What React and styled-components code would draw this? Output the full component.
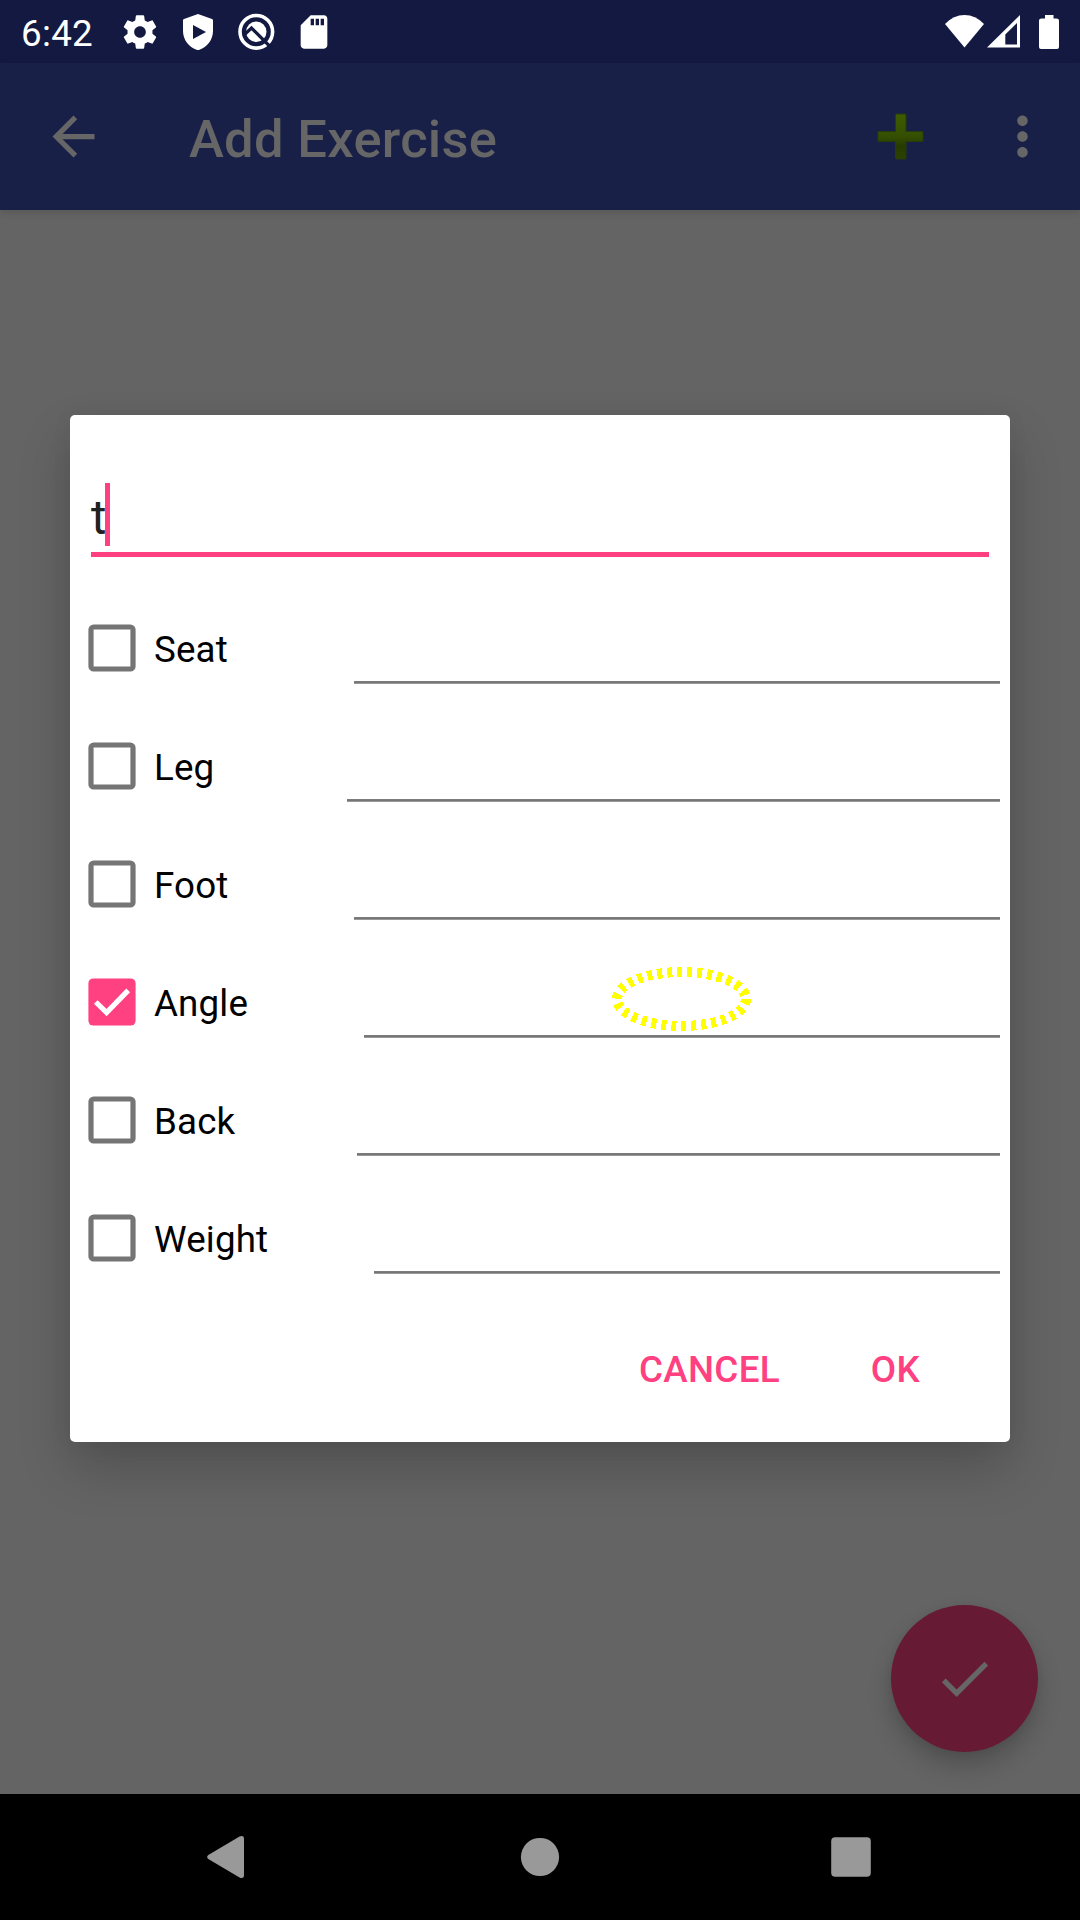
import React from "react";
import styled, { createGlobalStyle } from "styled-components";

const accent = "#ff4081";

const GlobalStyle = createGlobalStyle`
  html, body { margin: 0; padding: 0; background: #000; overflow: hidden; }
  * { box-sizing: border-box; }
`;

const Screen = styled.div`
  position: relative;
  display: flex;
  flex-direction: column;
  width: 1080px;
  height: 1920px;
  overflow: hidden;
  background: #646464;
  font-family: Roboto, "Noto Sans", sans-serif;
`;

const StatusBar = styled.header`
  display: flex;
  align-items: center;
  height: 63px;
  padding: 0 21px;
  background: #131940;
  color: #fff;
`;

const Clock = styled.span`
  width: 99px;
  font-size: 36.75px;
  line-height: 43px;
  padding-top: 3px;
  letter-spacing: 0.3px;
`;

const Notifications = styled.div`
  display: flex;
  flex: 1;
  gap: 18px;
`;

const SystemIcons = styled.div`
  display: flex;
  align-items: center;
`;

const Glyph = styled.svg`
  display: block;
  flex: none;
  width: ${(p) => p.$w}px;
  height: ${(p) => p.$h || p.$w}px;
  margin-left: ${(p) => p.$ml || 0}px;
  fill: ${(p) => p.$fill || "currentColor"};
`;

const Toolbar = styled.nav`
  display: flex;
  align-items: center;
  height: 147px;
  padding: 0 26px 0 42px;
  background: #192048;
  color: #666;
  box-shadow: 0 2px 8px rgba(0, 0, 0, 0.14);
`;

const Title = styled.h1`
  flex: 1;
  margin: 0;
  padding: 4px 0 0 84px;
  font-size: 52.5px;
  line-height: 62px;
  font-weight: 500;
  letter-spacing: 0.3px;
`;

const Content = styled.main`
  flex: 1;
`;

const NavBar = styled.footer`
  display: flex;
  align-items: center;
  height: 126px;
  padding-left: 207px;
  background: #000;
  color: #999;
`;

const Fab = styled.button`
  position: absolute;
  right: 42px;
  bottom: 168px;
  display: flex;
  align-items: center;
  justify-content: center;
  width: 147px;
  height: 147px;
  padding: 0;
  border: 0;
  border-radius: 50%;
  background: #661a34;
  color: #666;
  box-shadow: 0 14px 24px rgba(0, 0, 0, 0.2), 0 2px 8px rgba(0, 0, 0, 0.06);
`;

const Dialog = styled.section`
  position: absolute;
  left: 70px;
  top: 415px;
  display: flex;
  flex-direction: column;
  width: 940px;
  height: 1027px;
  border-radius: 5px;
  background: #fff;
  box-shadow: 0 26px 52px rgba(0, 0, 0, 0.2), 0 0 24px rgba(0, 0, 0, 0.04);
`;

const NameField = styled.div`
  display: flex;
  align-items: flex-end;
  height: 142px;
  margin: 0 21px 32px;
  padding-bottom: 11px;
  padding-bottom: 6px;
  border-bottom: 5px solid ${accent};
  color: #212121;
  font-size: 47.25px;
`;

const NameText = styled.span`
  width: 14px;
  height: 63px;
  line-height: 70px;
`;

const Caret = styled.span`
  width: 5px;
  height: 63px;
  background: ${accent};
`;

const Row = styled.div`
  display: flex;
  align-items: center;
  height: 118px;
  padding: 0 10px 0 18px;
`;

const Box = styled.span`
  display: flex;
  flex: none;
  width: 48px;
  height: 48px;
  color: ${(p) => (p.$checked ? accent : "#757575")};
`;

const Label = styled.label`
  flex: 1;
  padding: 2px 0 0 18px;
  color: #000;
  font-size: 36.75px;
  line-height: 43px;
  letter-spacing: 0.15px;
`;

const Field = styled.div`
  align-self: flex-end;
  width: ${(p) => p.$width}px;
  height: 3px;
  margin-bottom: 23px;
  background: linear-gradient(#7c7c7c 0 1px, #757575 1px 2px, #999 2px 3px);
`;

const Actions = styled.div`
  display: flex;
  flex: 1;
  align-items: center;
  justify-content: flex-end;
  gap: 91px;
  padding-right: 90px;
`;

const Action = styled.button`
  padding: 0;
  border: 0;
  background: none;
  color: ${accent};
  font: 500 36.75px/43px Roboto, "Noto Sans", sans-serif;
  letter-spacing: 0.3px;
`;

const Marker = styled.svg`
  position: absolute;
  left: 610px;
  top: 964px;
  width: 144px;
  height: 70px;
`;

const rows = [
  { name: "Seat", width: 646 },
  { name: "Leg", width: 653 },
  { name: "Foot", width: 646 },
  { name: "Angle", width: 636, checked: true },
  { name: "Back", width: 643 },
  { name: "Weight", width: 626 },
];

function CheckMark({ checked }) {
  return (
    <Box $checked={checked}>
      <Glyph $w={48} viewBox="0 0 48 48">
        {checked ? (
          <>
            <rect x="0.4" y="0.4" width="47.2" height="47.2" rx="5" />
            <path d="M7.8 24L18.6 34.600L40.2 12.400" fill="none" stroke="#fff" strokeWidth="5.2" />
          </>
        ) : (
          <rect x="3" y="3" width="42" height="42" rx="2.6" fill="none" stroke="currentColor" strokeWidth="5.2" />
        )}
      </Glyph>
    </Box>
  );
}

export default function App() {
  return (
    <>
      <GlobalStyle />
      <Screen>
        <StatusBar>
          <Clock>6:42</Clock>
          <Notifications>
            <Glyph $w={40} viewBox="0 0 24 24">
              <path d="M19.43 12.98c.04-.32.07-.64.07-.98s-.03-.66-.07-.98l2.11-1.65c.19-.15.24-.42.12-.64l-2-3.46c-.12-.22-.39-.3-.61-.22l-2.49 1c-.52-.4-1.08-.73-1.69-.98l-.38-2.65C14.46 2.18 14.25 2 14 2h-4c-.25 0-.46.18-.49.42l-.38 2.65c-.61.25-1.17.59-1.69.98l-2.49-1c-.23-.09-.49 0-.61.22l-2 3.46c-.13.22-.07.49.12.64l2.11 1.65c-.04.32-.07.65-.07.98s.03.66.07.98l-2.11 1.65c-.19.15-.24.42-.12.64l2 3.46c.12.22.39.3.61.22l2.49-1c.52.4 1.08.73 1.69.98l.38 2.65c.03.24.24.42.49.42h4c.25 0 .46-.18.49-.42l.38-2.65c.61-.25 1.17-.59 1.69-.98l2.49 1c.23.09.49 0 .61-.22l2-3.46c.12-.22.07-.49-.12-.64l-2.11-1.65zM12 15.5c-1.93 0-3.5-1.57-3.5-3.5s1.57-3.5 3.5-3.5 3.5 1.57 3.5 3.5-1.57 3.5-3.5 3.5z" />
            </Glyph>
            <Glyph $w={40} viewBox="0 0 40 40">
              <path fillRule="evenodd" d="M20 2L34 7Q35 7.400 35 8.500V19C35 28 29 35 21.500 37.700Q20 38.200 18.500 37.700C11 35 5 28 5 19V8.500Q5 7.400 6 7ZM15 13V27L28 20Z" />
            </Glyph>
            <Glyph $w={40} viewBox="0 0 40 40">
              <circle cx="20.300" cy="19.800" r="16.300" fill="none" stroke="currentColor" strokeWidth="3.600" />
              <circle cx="20.300" cy="19.800" r="10.200" />
              <path d="M8.500 22.500L15.500 16L36 36.500" fill="none" stroke="#131940" strokeWidth="3.200" />
            </Glyph>
            <Glyph $w={40} viewBox="0 0 24 24">
              <path d="M18 2h-8L4.020 8 4 20c0 1.100.9 2 2 2h12c1.100 0 2-.9 2-2V4c0-1.100-.9-2-2-2zm-6 6h-2V4h2v4zm3 0h-2V4h2v4zm3 0h-2V4h2v4z" />
            </Glyph>
          </Notifications>
          <SystemIcons>
            <Glyph $w={39} $h={33} viewBox="0 0 39 33">
              <path d="M0 9Q8.500 0 19.500 0T39 9L19.500 32.500Z" />
            </Glyph>
            <Glyph $w={33} $h={33} $ml={3} viewBox="0 0 33 33">
              <path fillRule="evenodd" d="M33 0V32.500H0ZM30 8L18.300 19.500V29.500H30Z" />
            </Glyph>
            <Glyph $w={20} $h={34} $ml={19} viewBox="0 0 20 34">
              <path d="M6 0H14.500V3.500H17.500Q20 3.500 20 5.500V32Q20 34 18 34H2Q0 34 0 32V5.500Q0 3.500 2.500 3.500H6Z" />
            </Glyph>
          </SystemIcons>
        </StatusBar>

        <Toolbar>
          <Glyph $w={63} viewBox="0 0 24 24">
            <path d="M20 11H7.830l5.590-5.590L12 4l-8 8 8 8 1.410-1.410L7.830 13H20v-2z" />
          </Glyph>
          <Title>Add Exercise</Title>
          <Glyph $w={47} viewBox="0 0 47 47">
            <defs>
              <linearGradient id="plus" x1="0" y1="0" x2="0" y2="1">
                <stop offset="0" stopColor="#3e5c00" />
                <stop offset="0.5" stopColor="#354f00" />
                <stop offset="0.7" stopColor="#273b00" />
                <stop offset="1" stopColor="#2b4100" />
              </linearGradient>
            </defs>
            <path
              d="M19.500 1H28Q29 1 29 2V18.500H45Q46 18.500 46 19.500V27.500Q46 28.500 45 28.500H29V45Q29 46 28 46H19.500Q18.500 46 18.500 45V28.500H2Q1 28.500 1 27.500V19.500Q1 18.500 2 18.500H18.500V2Q18.500 1 19.500 1Z"
              fill="url(#plus)"
              stroke="#263c0b"
              strokeWidth="1"
            />
          </Glyph>
          <Glyph $w={63} $ml={67} viewBox="0 0 24 24">
            <path d="M12 8c1.100 0 2-.9 2-2s-.9-2-2-2-2 .9-2 2 .9 2 2 2zm0 2c-1.100 0-2 .9-2 2s.9 2 2 2 2-.9 2-2-.9-2-2-2zm0 6c-1.100 0-2 .9-2 2s.9 2 2 2 2-.9 2-2-.9-2-2-2z" />
          </Glyph>
        </Toolbar>

        <Content />

        <Fab aria-label="Save">
          <Glyph $w={63} viewBox="0 0 24 24">
            <path d="M9 16.170L4.830 12l-1.420 1.410L9 19 21 7l-1.410-1.410z" />
          </Glyph>
        </Fab>

        <NavBar>
          <Glyph $w={37} $h={42} viewBox="0 0 37 42">
            <path d="M32.500 0.600Q37 -1.200 37 3V39Q37 43.200 32.500 41.400L1.300 23Q-1 21 1.300 19Z" />
          </Glyph>
          <Glyph $w={40} $ml={276} viewBox="0 0 40 40">
            <circle cx="20" cy="20" r="19.100" />
          </Glyph>
          <Glyph $w={40} $ml={271} viewBox="0 0 40 40">
            <rect x="0.200" y="0.200" width="39.600" height="39.600" rx="4" />
          </Glyph>
        </NavBar>

        <Dialog role="dialog">
          <NameField>
            <NameText>t</NameText>
            <Caret />
          </NameField>
          {rows.map((row) => (
            <Row key={row.name}>
              <CheckMark checked={row.checked} />
              <Label>{row.name}</Label>
              <Field $width={row.width} />
            </Row>
          ))}
          <Actions>
            <Action>CANCEL</Action>
            <Action>OK</Action>
          </Actions>
        </Dialog>

        <Marker viewBox="0 0 144 70" shapeRendering="crispEdges">
          <path
            d="M136 35A64.500 27 0 0 1 7 35A64.500 27 0 0 1 136 35"
            fill="none"
            stroke="#ff0"
            strokeWidth="10"
            strokeDasharray="5 5"
          />
        </Marker>
      </Screen>
    </>
  );
}
